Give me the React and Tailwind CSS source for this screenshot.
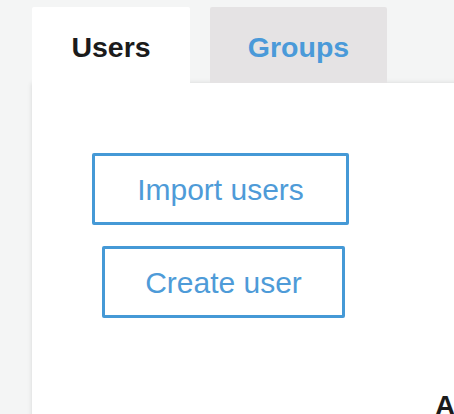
import React from 'react';

export default function App() {
  return (
    <div className="w-[454px] h-[414px] overflow-hidden bg-[#f4f5f5] pl-[32px] pt-[7px] font-['Liberation_Sans',Arial,sans-serif]">
      {/* tabs */}
      <div className="flex gap-[20px] h-[76px]">
        <div className="w-[158px] bg-white rounded-t-[2px] flex items-center justify-center pt-[4px] text-[28.5px] font-bold text-[#1b1b1b]">
          Users
        </div>
        <div className="w-[177px] bg-[#e5e3e4] rounded-t-[2px] flex items-center justify-center pt-[4px] text-[28.5px] font-bold text-[#4a9ad9]">
          Groups
        </div>
      </div>

      {/* panel */}
      <div className="w-[700px] h-[500px] bg-white shadow-[0_0_5px_rgba(0,0,0,0.12)] flex pl-[60px] pt-[70px]">
        <div className="flex flex-col items-start gap-[21px]">
          <button className="w-[257px] h-[72px] border-[3px] border-[#4599d6] rounded-[2px] text-[30px] text-[#4e9bd8] pt-[1px]">
            Import users
          </button>
          <button className="ml-[10px] w-[243px] h-[72px] border-[3px] border-[#4599d6] rounded-[2px] text-[30px] text-[#4e9bd8] pt-[1px]">
            Create user
          </button>
        </div>
        <div className="ml-[86px] pt-[237px]">
          <h3 className="text-[28px] leading-[32px] font-bold text-[#1b1b1b] whitespace-nowrap">Actions</h3>
        </div>
      </div>
    </div>
  );
}
